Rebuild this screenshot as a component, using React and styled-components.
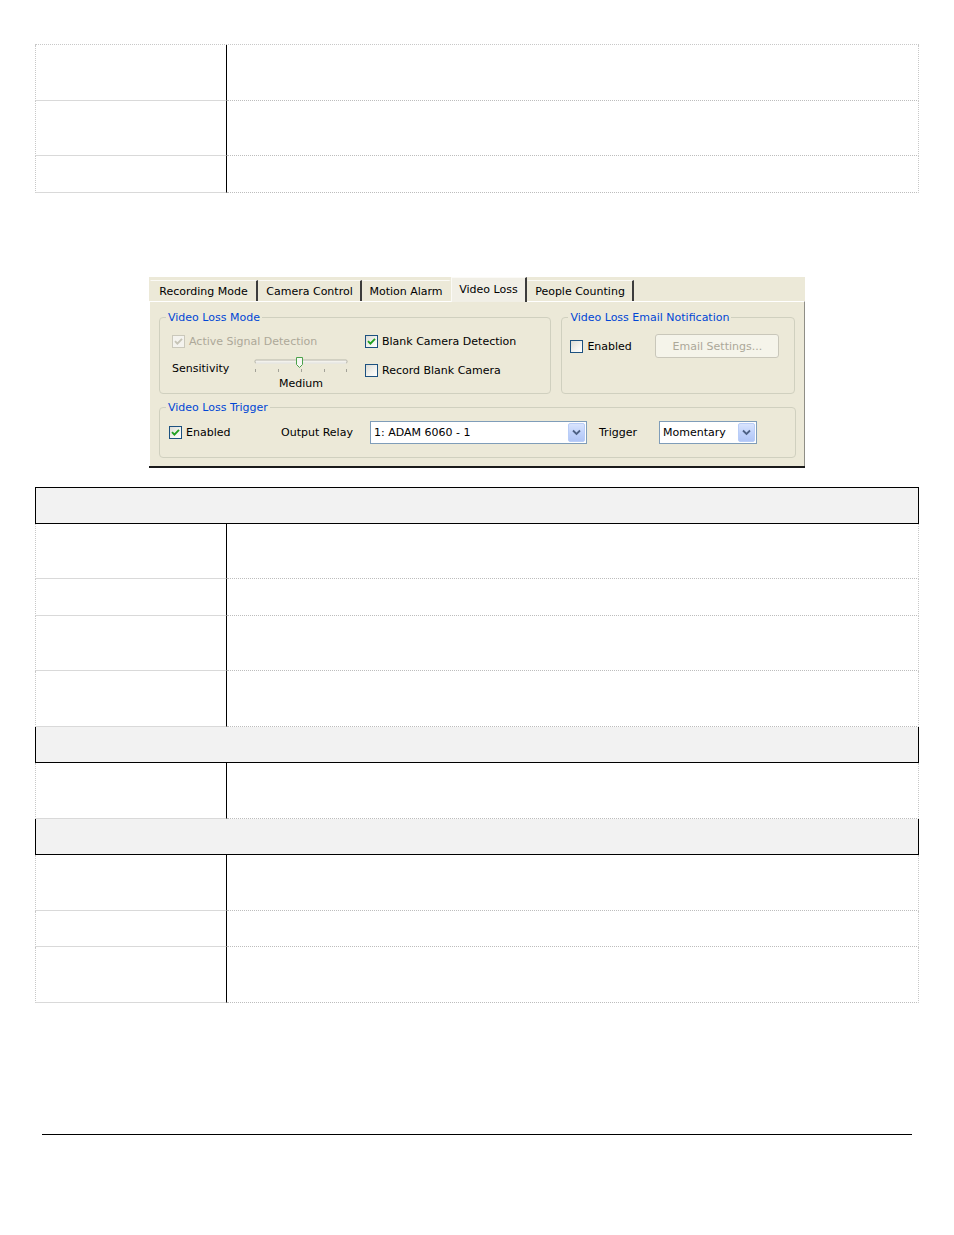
import React from 'react';
import styled, { createGlobalStyle } from 'styled-components';

const GlobalStyle = createGlobalStyle`
    html, body {
        margin: 0;
        padding: 0;
        background: #ffffff;
    }
    body {
        font-family: "DejaVu Sans", Tahoma, sans-serif;
        color: #000;
    }
    * {
        box-sizing: border-box;
    }
`

const Page = styled.div`
    width: 954px;
    min-height: 1235px;
    padding: 44px 35px 0;
    display: flex;
    flex-direction: column;
`

/* ---------- document tables ---------- */

const Table = styled.div`
    width: 884px;
    display: flex;
    flex-direction: column;
    border-top: ${p => p.$dottedTop ? '1px dotted #c8c8c8' : 'none'};
`

const Row = styled.div`
    display: grid;
    grid-template-columns: 192px 1fr;
    height: ${p => p.$h}px;
`

const LabelCell = styled.div`
    border-left: 1px dotted #c8c8c8;
    border-right: 1px solid #000;
    border-bottom: 1px solid #d9d9d9;
`

const ValueCell = styled.div`
    border-right: 1px dotted #c8c8c8;
    border-bottom: 1px dotted #bdbdbd;
`

const HeaderRow = styled.div`
    height: ${p => p.$h}px;
    background: #f2f2f2;
    border-left: 1px solid #000;
    border-right: 1px solid #000;
    border-bottom: 1px solid #000;
    border-top: ${p => p.$first ? '1px solid #000' : 'none'};
`

const FooterRule = styled.div`
    width: 870px;
    margin: 131px 0 0 7px;
    border-top: 1px solid #000;
`

/* ---------- settings dialog ---------- */

const Dialog = styled.div`
    align-self: center;
    width: 656px;
    height: 191px;
    margin-top: 84px;
    margin-bottom: 19px;
    background: #ece9d8;
    display: flex;
    flex-direction: column;
    font-size: 11px;
    border-bottom: 2px solid #1a1a1a;
`

const TabStrip = styled.div`
    height: 24px;
    display: flex;
    align-items: flex-end;
    padding-left: 1px;
    position: relative;
    z-index: 1;
`

const Tab = styled.div`
    width: ${p => p.$w}px;
    height: ${p => p.$active ? 25 : 21}px;
    margin-bottom: ${p => p.$active ? -1 : 0}px;
    display: flex;
    align-items: center;
    justify-content: center;
    padding-bottom: ${p => p.$active ? 1 : 0}px;
    background: ${p => p.$active ? '#f1efe6' : '#ece9d8'};
    border-top: 1px solid #fbfaf6;
    border-left: 1px solid ${p => p.$active ? '#fbfaf6' : 'transparent'};
    border-right: 2px solid ${p => p.$sep ? '#3c3c3c' : 'transparent'};
    white-space: nowrap;
`

const Panel = styled.div`
    flex: 1;
    border-top: 1px solid #ffffff;
    border-left: 1px solid #ffffff;
    border-right: 1px solid #8f8e86;
    padding: 9px 9px 0 9px;
    display: flex;
    flex-direction: column;
    gap: 7px;
`

const GroupRow = styled.div`
    display: flex;
    gap: 10px;
`

const Group = styled.fieldset`
    margin: 0;
    padding: 0;
    min-width: 0;
    width: ${p => p.$w}px;
    height: ${p => p.$h}px;
    border: 1px solid #d0d0bf;
    border-radius: 4px;
`

const Legend = styled.legend`
    margin-left: 6px;
    padding: 0 2px;
    color: #0046d5;
    font-size: 11px;
    line-height: 13px;
`

const ModeBody = styled.div`
    display: grid;
    grid-template-columns: 193px 1fr;
    padding: 9px 0 0 12px;
`

const Column = styled.div`
    display: flex;
    flex-direction: column;
    gap: ${p => p.$gap}px;
`

const InlineRow = styled.div`
    display: flex;
    align-items: ${p => p.$align || 'center'};
`

const CheckItem = styled.label`
    display: flex;
    align-items: center;
    gap: 4px;
    height: 16px;
    width: ${p => p.$w ? `${p.$w}px` : 'auto'};
    color: ${p => p.$disabled ? '#aca899' : '#000'};
    white-space: nowrap;
    flex: none;
`

const Box = styled.span`
    width: 13px;
    height: 13px;
    flex: none;
    display: inline-flex;
    align-items: center;
    justify-content: center;
    border: 1px solid ${p => p.$disabled ? '#cac8bb' : '#1c5180'};
    background: ${p => p.$disabled
        ? '#f4f3ee'
        : 'linear-gradient(135deg, #dcdcd5 0%, #f4f4f0 60%, #ffffff 100%)'};
`

const Text = styled.span`
    width: ${p => p.$w ? `${p.$w}px` : 'auto'};
    margin-top: ${p => p.$mt || 0}px;
    padding-left: ${p => p.$pl || 0}px;
    line-height: 14px;
    white-space: nowrap;
    flex: none;
`

const SliderBlock = styled.div`
    width: 94px;
    display: flex;
    flex-direction: column;
    align-items: center;
`

const SliderCaption = styled.span`
    line-height: 13px;
    margin-top: 5px;
`

const XpButton = styled.div`
    width: ${p => p.$w}px;
    height: 24px;
    display: flex;
    align-items: center;
    justify-content: center;
    border: 1px solid #c9c7ba;
    border-radius: 3px;
    background: #f5f4ea;
    color: #aca899;
    white-space: nowrap;
`

const Select = styled.div`
    width: ${p => p.$w}px;
    height: 23px;
    flex: none;
    display: flex;
    align-items: center;
    justify-content: space-between;
    padding: 0 1px 0 3px;
    border: 1px solid #7f9db9;
    background: #fff;
    white-space: nowrap;
`

const DropButton = styled.span`
    width: 17px;
    height: 19px;
    display: flex;
    align-items: center;
    justify-content: center;
    border: 1px solid #b9cdf7;
    border-radius: 2px;
    background: linear-gradient(180deg, #d9e4fd 0%, #c1d3fb 50%, #b1c6f6 100%);
`

const TriggerBody = styled.div`
    display: flex;
    align-items: center;
    padding: 7px 0 0 9px;
`

const EmailBody = styled.div`
    display: flex;
    align-items: center;
    padding: 10px 0 0 8px;
`

function Check({ checked, disabled, label, w }) {
    return (
        <CheckItem $disabled={disabled} $w={w}>
            <Box $disabled={disabled}>
                {checked && (
                    <svg width="9" height="9" viewBox="0 0 9 9">
                        <polyline points="1,4.2 3.4,6.6 8,1.8" fill="none"
                            stroke={disabled ? '#c6c4b6' : '#21a121'} strokeWidth="1.9" />
                    </svg>
                )}
            </Box>
            {label}
        </CheckItem>
    );
}

function Dropdown({ value, w }) {
    return (
        <Select $w={w}>
            <span>{value}</span>
            <DropButton>
                <svg width="9" height="7" viewBox="0 0 9 7">
                    <polyline points="1,1.5 4.5,5 8,1.5" fill="none" stroke="#4d6185" strokeWidth="1.8" />
                </svg>
            </DropButton>
        </Select>
    );
}

function Slider() {
    const ticks = [1.5, 24.5, 47.5, 70.5, 92.5];
    return (
        <svg width="94" height="16" viewBox="0 0 94 16">
            <rect x="1" y="4" width="92" height="3" rx="1" fill="#f3f2ec" stroke="#a9a89f" strokeWidth="0.8" />
            <line x1="2" y1="7" x2="92" y2="7" stroke="#ffffff" strokeWidth="1" />
            {ticks.map(x => (
                <line key={x} x1={x} y1="13" x2={x} y2="16" stroke="#a3a298" strokeWidth="1" />
            ))}
            <path d="M42.5 1.5 H48.5 V8.5 L45.5 11.5 L42.5 8.5 Z" fill="#f7f7f3" stroke="#4ba24b" strokeWidth="1" />
        </svg>
    );
}

function VideoLossDialog() {
    return (
        <Dialog>
            <TabStrip>
                <Tab $w={108} $sep>Recording Mode</Tab>
                <Tab $w={104} $sep>Camera Control</Tab>
                <Tab $w={89}>Motion Alarm</Tab>
                <Tab $w={76} $sep $active>Video Loss</Tab>
                <Tab $w={107} $sep>People Counting</Tab>
            </TabStrip>
            <Panel>
                <GroupRow>
                    <Group $w={393} $h={83}>
                        <Legend>Video Loss Mode</Legend>
                        <ModeBody>
                            <Column $gap={7}>
                                <Check checked disabled label="Active Signal Detection" />
                                <InlineRow $align="flex-start">
                                    <Text $w={82} $mt={6}>Sensitivity</Text>
                                    <SliderBlock>
                                        <Slider />
                                        <SliderCaption>Medium</SliderCaption>
                                    </SliderBlock>
                                </InlineRow>
                            </Column>
                            <Column $gap={13}>
                                <Check checked label="Blank Camera Detection" />
                                <Check label="Record Blank Camera" />
                            </Column>
                        </ModeBody>
                    </Group>
                    <Group $w={234} $h={83}>
                        <Legend>Video Loss Email Notification</Legend>
                        <EmailBody>
                            <Check label="Enabled" w={85} />
                            <XpButton $w={124}>Email Settings...</XpButton>
                        </EmailBody>
                    </Group>
                </GroupRow>
                <Group $w={637} $h={57}>
                    <Legend>Video Loss Trigger</Legend>
                    <TriggerBody>
                        <Check checked label="Enabled" w={112} />
                        <Text $w={89}>Output Relay</Text>
                        <Dropdown value="1: ADAM 6060 - 1" w={217} />
                        <Text $w={72} $pl={12}>Trigger</Text>
                        <Dropdown value="Momentary" w={98} />
                    </TriggerBody>
                </Group>
            </Panel>
        </Dialog>
    );
}

function BodyRow({ h }) {
    return (
        <Row $h={h}>
            <LabelCell />
            <ValueCell />
        </Row>
    );
}

export default function App() {
    return (
        <>
            <GlobalStyle />
            <Page>
                <Table $dottedTop>
                    <BodyRow h={56} />
                    <BodyRow h={55} />
                    <BodyRow h={37} />
                </Table>

                <VideoLossDialog />

                <Table>
                    <HeaderRow $h={37} $first />
                    <BodyRow h={55} />
                    <BodyRow h={37} />
                    <BodyRow h={55} />
                    <BodyRow h={56} />
                    <HeaderRow $h={36} />
                    <BodyRow h={56} />
                    <HeaderRow $h={36} />
                    <BodyRow h={56} />
                    <BodyRow h={36} />
                    <BodyRow h={56} />
                </Table>

                <FooterRule />
            </Page>
        </>
    );
}
